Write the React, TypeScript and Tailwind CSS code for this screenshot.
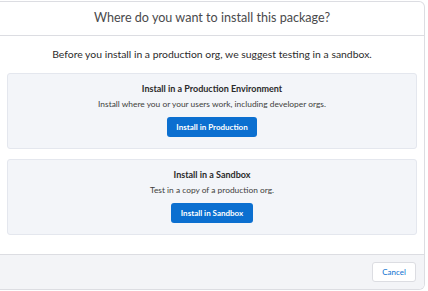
import React from 'react';

const font = { fontFamily: 'Lato, "Open Sans", "Liberation Sans", sans-serif' };

function OptionCard({ title, text, action, btnWidth }: { title: string; text: string; action: string; btnWidth: string }) {
  return (
    <div className="mx-[7px] h-[76px] rounded-[3px] border border-[#e4e7ee] bg-[#f3f5f9] flex flex-col items-center">
      <div className="mt-[9px] text-[9px] font-bold text-[#2b2b2b] leading-[12px]">{title}</div>
      <div className="mt-[3px] text-[8.4px] text-[#3e3e3c] leading-[12px]">{text}</div>
      <button className={`mt-[7px] h-[20px] ${btnWidth} rounded-[3px] bg-[#0b6fd0] text-white text-[8px] font-bold`}>
        {action}
      </button>
    </div>
  );
}

export default function App() {
  return (
    <div className="w-[428px] h-[291px] bg-white" style={font}>
      <div className="w-[425px] h-[289px] mt-[1px] border-t border-r border-b border-[#dcdde2] rounded-r-[6px] overflow-hidden flex flex-col">
        <div className="h-[34px] border-b border-[#dcdde2] flex items-center justify-center text-[12.6px] text-[#4a4a4c]">
          Where do you want to install this package?
        </div>
        <div className="flex-1 bg-white flex flex-col">
          <div className="h-[37px] flex items-center justify-center text-[10.4px] text-[#2b2b2b]">
            Before you install in a production org, we suggest testing in a sandbox.
          </div>
          <OptionCard
            title="Install in a Production Environment"
            text="Install where you or your users work, including developer orgs."
            action="Install in Production"
            btnWidth="w-[90px]"
          />
          <div className="h-[10px]" />
          <OptionCard
            title="Install in a Sandbox"
            text="Test in a copy of a production org."
            action="Install in Sandbox"
            btnWidth="w-[82px]"
          />
        </div>
        <div className="h-[35px] border-t border-[#dcdde2] bg-[#f3f4f7] flex items-center justify-end pr-[8px]">
          <button className="h-[20px] w-[44px] rounded-[3px] border border-[#dcdde2] bg-white text-[8px] text-[#0b6fd0]">
            Cancel
          </button>
        </div>
      </div>
    </div>
  );
}
